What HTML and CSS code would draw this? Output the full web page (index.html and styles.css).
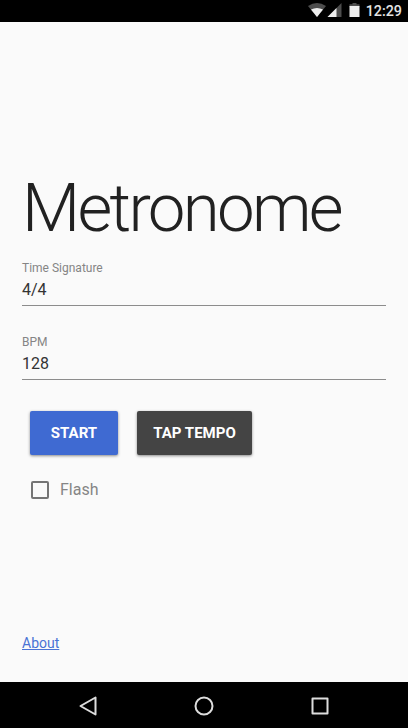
FILE: index.html
```html
<!DOCTYPE html>
<html lang="en">
<head>
<meta charset="utf-8">
<title>Metronome</title>
<link rel="stylesheet" href="styles.css">
</head>
<body>
<header class="status">
  <svg class="status-icons" width="54" height="22" viewBox="0 0 54 22">
    <path d="M0 6Q9 0 18 6L9 17Z" fill="#4d4d4d"/>
    <path d="M3 9.500Q9 6.500 15 9.500L9 17Z" fill="#eee"/>
    <path d="M33.500 3V17H19.500Z" fill="#4d4d4d"/>
    <path d="M28.500 8V17H19.500Z" fill="#eee"/>
    <path d="M44.500 3h4v1.300h3v2.700h-10v-2.700h3Z" fill="#4d4d4d"/>
    <path d="M41.500 6h10v11h-10Z" fill="#eee"/>
  </svg>
  <span class="clock">12:29</span>
</header>
<main class="content">
  <h1 class="title">Metronome</h1>
  <label class="field"><span class="label">Time Signature</span><span class="value">4/4</span></label>
  <label class="field"><span class="label">BPM</span><span class="value">128</span></label>
  <div class="actions">
    <button class="btn start">START</button>
    <button class="btn tap">TAP TEMPO</button>
  </div>
  <div class="check"><span class="box"></span><span class="check-label">Flash</span></div>
  <a class="about" href="#">About</a>
</main>
<nav class="navbar">
  <svg width="24" height="24" viewBox="0 0 24 24"><path d="M19.500 3.500V20.500L4.500 12Z"/></svg>
  <svg width="24" height="24" viewBox="0 0 24 24"><circle cx="12" cy="12" r="8.500"/></svg>
  <svg width="24" height="24" viewBox="0 0 24 24"><rect x="4.500" y="4.500" width="15" height="15"/></svg>
</nav>
</body>
</html>
```
FILE: styles.css
```css
* { box-sizing: border-box; }
body { margin: 0; width: 408px; height: 728px; overflow: hidden; display: flex; flex-direction: column; background: #fafafa; font-family: Roboto, sans-serif; color: #212121; }
.status { height: 22px; background: #000; color: #e4e4e4; display: flex; justify-content: flex-end; align-items: center; padding-right: 6px; gap: 4px; }
.clock { font-size: 14.300px; font-weight: 500; line-height: 22px; }
.content { flex: 1; display: flex; flex-direction: column; padding: 148px 22px 0; }
.title { margin: 0; font-size: 67.200px; font-weight: 300; line-height: 76px; letter-spacing: -.04em; height: 90px; white-space: nowrap; }
.field { display: flex; flex-direction: column; height: 46px; border-bottom: 1px solid #8c8c8c; margin-bottom: 28px; }
.label { font-size: 12px; line-height: 16px; color: #858585; }
.value { font-size: 16px; line-height: 28px; color: #333; }
.actions { display: flex; gap: 19px; padding: 3px 8px 0; }
.btn { height: 44px; border: 0; border-radius: 2px; padding: 0; color: #fff; font: 700 15px/44px Roboto, sans-serif; box-shadow: 0 1px 3px rgba(0,0,0,.45); }
.start { width: 88px; background: #3f6ad2; }
.tap { width: 115px; background: #444; }
.check { display: flex; align-items: center; gap: 11px; margin: 24px 0 0 9px; height: 22px; font-size: 16px; color: #858585; }
.check-label { padding-bottom: 2px; }
.box { width: 18px; height: 18px; border: 2px solid #757575; border-radius: 2px; }
.about { margin-top: auto; margin-bottom: 29px; font-size: 14px; line-height: 20px; color: #4a73d5; align-self: flex-start; }
.navbar { height: 46px; background: #000; display: flex; justify-content: center; gap: 92px; align-items: center; padding-top: 2px; }
.navbar svg { fill: none; stroke: #ddd; stroke-width: 2; stroke-linejoin: round; }
```
